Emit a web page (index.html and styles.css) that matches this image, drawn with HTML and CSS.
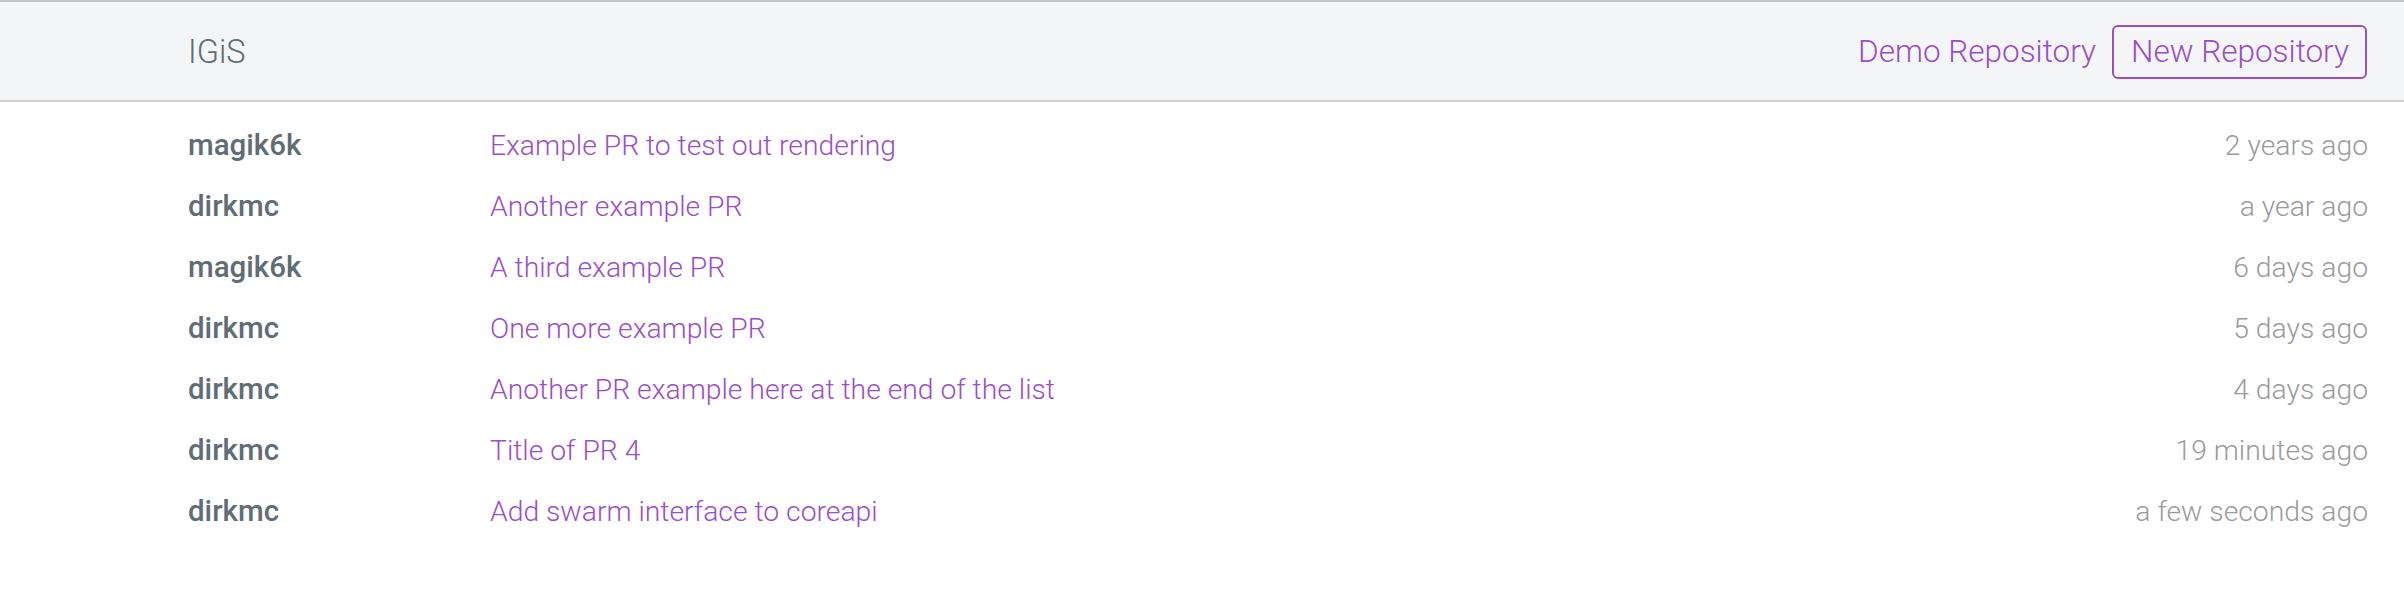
FILE: index.html
```html
<!DOCTYPE html>
<html lang="en">
<head>
<meta charset="utf-8">
<title>IGiS</title>
<link rel="stylesheet" href="styles.css">
</head>
<body>
<header class="topbar">
  <div class="brand">IGiS</div>
  <nav class="nav">
    <a class="nav-link" href="#">Demo Repository</a>
    <a class="nav-button" href="#">New Repository</a>
  </nav>
</header>
<main class="list">
  <div class="row"><span class="author">magik6k</span><a class="title" href="#">Example PR to test out rendering</a><span class="time">2 years ago</span></div>
  <div class="row"><span class="author">dirkmc</span><a class="title" href="#">Another example PR</a><span class="time">a year ago</span></div>
  <div class="row"><span class="author">magik6k</span><a class="title" href="#">A third example PR</a><span class="time">6 days ago</span></div>
  <div class="row"><span class="author">dirkmc</span><a class="title" href="#">One more example PR</a><span class="time">5 days ago</span></div>
  <div class="row"><span class="author">dirkmc</span><a class="title" href="#">Another PR example here at the end of the list</a><span class="time">4 days ago</span></div>
  <div class="row"><span class="author">dirkmc</span><a class="title" href="#">Title of PR 4</a><span class="time">19 minutes ago</span></div>
  <div class="row"><span class="author">dirkmc</span><a class="title" href="#">Add swarm interface to coreapi</a><span class="time">a few seconds ago</span></div>
</main>
</body>
</html>
```
FILE: styles.css
```css
html, body {
  margin: 0;
  padding: 0;
  background: #ffffff;
}
body {
  font-family: Roboto, "Liberation Sans", Arial, sans-serif;
  font-weight: 300;
  color: #606c76;
}
a {
  text-decoration: none;
}
.topbar {
  display: flex;
  align-items: center;
  justify-content: space-between;
  box-sizing: border-box;
  height: 102px;
  padding: 2px 37px 0 188px;
  background: #f4f5f6;
  border-top: 2px solid #c4c4c4;
  border-bottom: 2px solid #d1d1d1;
}
.brand {
  font-size: 32.5px;
  color: #606c76;
  line-height: 1;
}
.nav {
  display: flex;
  align-items: center;
  gap: 16px;
}
.nav-link {
  font-size: 31.5px;
  color: #9b4dca;
  line-height: 1;
}
.nav-button {
  display: flex;
  align-items: center;
  box-sizing: border-box;
  height: 54px;
  padding: 0 16px 0 17px;
  border: 2px solid #9b4dca;
  border-radius: 6px;
  font-size: 31.5px;
  color: #9b4dca;
  line-height: 1;
}
.list {
  padding: 13px 36px 0 188px;
}
.row {
  display: grid;
  grid-template-columns: 302px 1fr auto;
  height: 61px;
  line-height: 61px;
  font-size: 28.3px;
}
.author {
  font-weight: 500;
  font-size: 29.5px;
  color: #606c76;
}
.title {
  color: #9b4dca;
}
.time {
  color: #9b9b9b;
  text-align: right;
}
```
